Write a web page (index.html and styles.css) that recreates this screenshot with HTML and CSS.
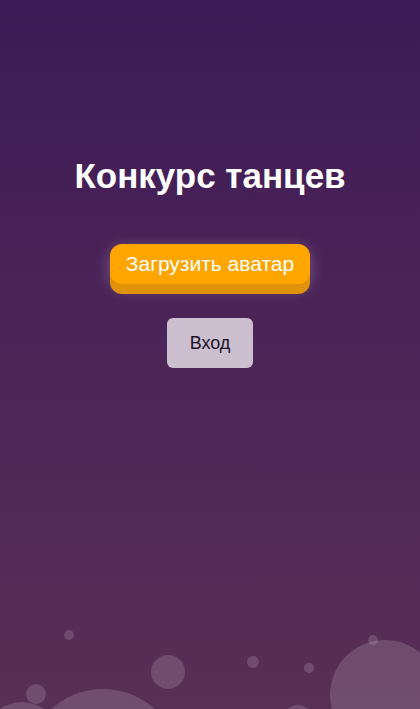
FILE: index.html
```html
<!DOCTYPE html>
<html lang="ru">
<head>
  <meta charset="UTF-8" />
  <title>Конкурс танцев</title>
  <link rel="stylesheet" href="styles.css">
</head>
<body>
  <div class="screen">
    <h1>Конкурс танцев</h1>
    <button class="upload-btn">Загрузить аватар</button>
    <button class="login-btn">Вход</button>

    <div class="bubbles">
      <span class="bubble b1"></span>
      <span class="bubble b2"></span>
      <span class="bubble b3"></span>
      <span class="bubble b4"></span>
      <span class="bubble b5"></span>
      <span class="bubble b6"></span>
      <span class="bubble b7"></span>
      <span class="bubble b8"></span>
      <span class="bubble b9"></span>
      <span class="bubble b10"></span>
    </div>
  </div>
</body>
</html>
```

FILE: styles.css
```css
html, body {
  margin: 0;
  height: 100%;
}

body {
  font-family: "Liberation Sans", Arial, sans-serif;
  background: linear-gradient(to bottom, #3c1a55 0%, #4a2358 40%, #582f55 100%);
  overflow: hidden;
}

.screen {
  position: relative;
  height: 100%;
  display: flex;
  flex-direction: column;
  align-items: center;
  padding-top: 152px;
  box-sizing: border-box;
}

h1 {
  margin: 0;
  color: #fff;
  font-size: 35px;
  font-weight: bold;
  line-height: 48px;
}

.upload-btn {
  margin-top: 44px;
  width: 200px;
  height: 40px;
  border: none;
  border-radius: 12px;
  background-color: #ffa500;
  color: #fff;
  font-family: inherit;
  font-size: 21px;
  box-shadow: 0 10px 0 #e0930a, 0 4px 16px rgba(255, 255, 255, 0.28);
  cursor: pointer;
}

.login-btn {
  margin-top: 34px;
  width: 86px;
  height: 50px;
  border: none;
  border-radius: 6px;
  background-color: #cbbfd0;
  color: #1e1226;
  font-family: inherit;
  font-size: 18px;
  cursor: pointer;
}

.bubbles {
  position: absolute;
  left: 0;
  right: 0;
  bottom: 0;
  height: 120px;
  overflow: hidden;
  pointer-events: none;
}

.bubble {
  position: absolute;
  border-radius: 50%;
  background: rgba(255, 255, 255, 0.15);
}

/* positions measured from the bottom strip (top = y 589) */
.b1 { left: 64px; top: 41px; width: 10px; height: 10px; }
.b2 { left: 151px; top: 66px; width: 34px; height: 34px; }
.b3 { left: 26px; top: 95px; width: 20px; height: 20px; }
.b4 { left: 26px; top: 100px; width: 154px; height: 154px; }
.b5 { left: -16px; top: 113px; width: 76px; height: 76px; }
.b6 { left: 247px; top: 67px; width: 12px; height: 12px; }
.b7 { left: 304px; top: 74px; width: 10px; height: 10px; }
.b8 { left: 368px; top: 46px; width: 10px; height: 10px; }
.b9 { left: 330px; top: 51px; width: 110px; height: 110px; }
.b10 { left: 283px; top: 116px; width: 30px; height: 30px; }
```
